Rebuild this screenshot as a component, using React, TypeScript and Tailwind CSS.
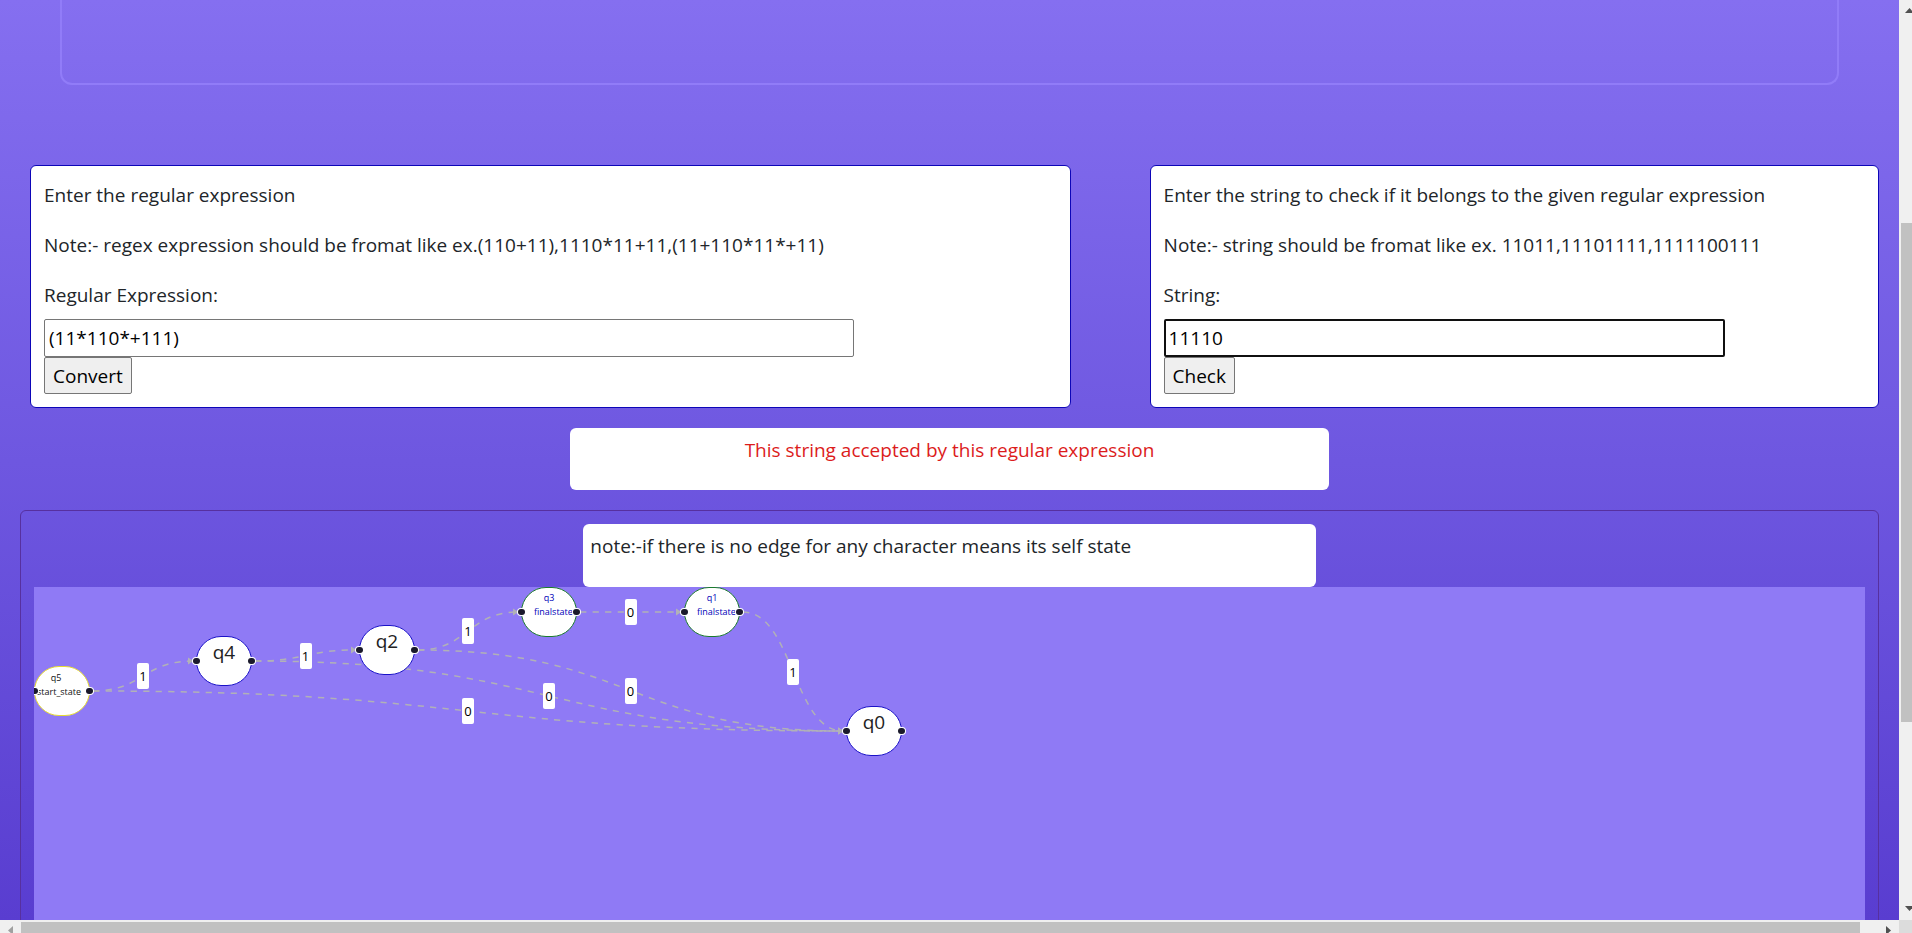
const NODES = [
  { id: "q5", x: 0, y: 79, kind: "start" },
  { id: "q4", x: 162, y: 49, kind: "plain" },
  { id: "q2", x: 325, y: 38, kind: "plain" },
  { id: "q3", x: 487, y: 0, kind: "final" },
  { id: "q1", x: 650, y: 0, kind: "final" },
  { id: "q0", x: 812, y: 119, kind: "plain" },
];

const EDGES = [
  { from: "q5", to: "q4", label: "1" },
  { from: "q5", to: "q0", label: "0" },
  { from: "q4", to: "q2", label: "1" },
  { from: "q4", to: "q0", label: "0" },
  { from: "q2", to: "q3", label: "1" },
  { from: "q2", to: "q0", label: "0" },
  { from: "q3", to: "q1", label: "0" },
  { from: "q1", to: "q0", label: "1" },
];

const NODE_W = 56;
const NODE_H = 50;

function ends(edge: { from: string; to: string }) {
  const a = NODES.find((n) => n.id === edge.from)!;
  const b = NODES.find((n) => n.id === edge.to)!;
  return {
    x1: a.x + NODE_W + 3,
    y1: a.y + NODE_H / 2,
    x2: b.x - 3,
    y2: b.y + NODE_H / 2,
  };
}

const NODE_STYLE: Record<string, string> = {
  start: "border-[#e6dc32] text-[#111] text-[9px] leading-[14px] pt-1",
  plain: "border-[#1a12c8] text-[#222] text-[19px] leading-[30px]",
  final: "border-[#1b7a2e] text-[#0000b8] text-[9px] leading-[14px] pt-[3px]",
};

function Graph() {
  return (
    <div className="relative h-[400px] overflow-hidden bg-[#8f7af5]">
      <svg className="absolute inset-0 size-full" fill="none" stroke="#b1b1b7" aria-hidden="true">
        <defs>
          <marker id="arrow" viewBox="0 0 6 8" refX="5" refY="4" markerWidth="6" markerHeight="8" markerUnits="userSpaceOnUse" orient="0">
            <path d="M0 0.5L5.5 4L0 7.5Z" fill="#b1b1b7" stroke="none" />
          </marker>
        </defs>
        {EDGES.map((e) => {
          const { x1, y1, x2, y2 } = ends(e);
          const m = (x1 + x2) / 2;
          return (
            <path
              key={e.from + e.to}
              d={`M${x1},${y1} C${m},${y1} ${m},${y2} ${x2},${y2}`}
              strokeDasharray="6.25"
              strokeWidth="1.5"
              markerEnd="url(#arrow)"
            />
          );
        })}
      </svg>
      {EDGES.map((e) => {
        const { x1, y1, x2, y2 } = ends(e);
        return (
          <span
            key={e.from + e.to}
            className="absolute flex h-[26px] w-3 -translate-x-1/2 -translate-y-1/2 items-center justify-center rounded-xs bg-white text-[13px] text-black"
            style={{ left: (x1 + x2) / 2, top: (y1 + y2) / 2 }}
          >
            {e.label}
          </span>
        );
      })}
      {NODES.map((n) => (
        <div
          key={n.id}
          className={`absolute h-[50px] w-14 rounded-full border bg-white text-center ${NODE_STYLE[n.kind]}`}
          style={{ left: n.x, top: n.y }}
        >
          {n.kind === "start" && (
            <>
              <div className="pr-3">{n.id}</div>
              <div className="pl-0.5 text-left">start_state</div>
            </>
          )}
          {n.kind === "plain" && n.id}
          {n.kind === "final" && (
            <>
              <div>{n.id}</div>
              <div className="pl-3 text-left">finalstate</div>
            </>
          )}
          <span className="absolute top-[21px] -left-1 h-1.5 w-[7px] rounded-full bg-[#1a192b] ring-1 ring-white" />
          <span className="absolute top-[21px] -right-1 h-1.5 w-[7px] rounded-full bg-[#1a192b] ring-1 ring-white" />
        </div>
      ))}
    </div>
  );
}

type FormProps = {
  id: string;
  title: string;
  note: string;
  label: string;
  value: string;
  action: string;
  className: string;
  inputClass: string;
};

function FormCard({ id, title, note, label, value, action, className, inputClass }: FormProps) {
  return (
    <form
      className={`rounded-md border border-[#0d06b8] bg-white px-[13px] pt-3.5 pb-[13px] ${className}`}
      onSubmit={(e) => e.preventDefault()}
    >
      <p className="mb-5">{title}</p>
      <p className="mb-5">{note}</p>
      <label htmlFor={id} className="mb-[9px] block">
        {label}
      </label>
      <input
        id={id}
        type="text"
        defaultValue={value}
        className={`block h-[38px] rounded-xs bg-white text-black outline-none ${inputClass}`}
      />
      <button type="submit" className="block h-[37px] rounded-xs border border-[#767676] bg-[#efefef] px-2 text-black">
        {action}
      </button>
    </form>
  );
}

function Bar({ vertical }: { vertical?: boolean }) {
  return vertical ? (
    <div className="flex w-[13px] shrink-0 flex-col overflow-hidden bg-[#f0f0f0] pl-0.5" aria-hidden="true">
      <svg className="h-[223px] w-4 shrink-0" viewBox="0 0 16 223">
        <path d="M4 13L8.500 8L13 13Z" fill="#505050" />
      </svg>
      <div className="h-[499px] shrink-0 bg-[#c1c1c1]" />
      <div className="grow" />
      <svg className="h-5 w-4 shrink-0" viewBox="0 0 16 20">
        <path d="M4 6L8.500 11L13 6Z" fill="#505050" />
      </svg>
    </div>
  ) : (
    <div className="flex h-[13px] shrink-0 overflow-hidden bg-[#f0f0f0] pt-0.5" aria-hidden="true">
      <svg className="h-4 w-[21px] shrink-0" viewBox="0 0 21 16">
        <path d="M13 4L8 8.500L13 13Z" fill="#a0a0a0" />
      </svg>
      <div className="grow bg-[#c1c1c1]" />
      <svg className="h-4 w-[39px] shrink-0" viewBox="0 0 39 16">
        <path d="M26 4L31 8.500L26 13Z" fill="#505050" />
      </svg>
      <div className="-mt-0.5 h-4 w-[13px] shrink-0 bg-[#dcdcdc]" />
    </div>
  );
}

export default function App() {
  return (
    <div className="flex h-screen flex-col overflow-hidden font-['Open_Sans',sans-serif] text-[19px] leading-[30px] text-[#212529]">
      <div className="flex min-h-0 grow">
        <main className="min-w-0 grow overflow-hidden bg-linear-to-b from-[#856ff0] to-[#593dd0]">
          <div className="mx-[60px] h-[85px] rounded-b-xl border-2 border-t-0 border-[#917cf8]" />
          <div className="mt-20 mr-5 ml-[30px] flex justify-between">
            <FormCard
              id="regex"
              title="Enter the regular expression"
              note="Note:- regex expression should be fromat like ex.(110+11),1110*11+11,(11+110*11*+11)"
              label="Regular Expression:"
              value="(11*110*+111)"
              action="Convert"
              className="w-[56.3%]"
              inputClass="w-4/5 border border-[#767676] px-1"
            />
            <FormCard
              id="string"
              title="Enter the string to check if it belongs to the given regular expression"
              note="Note:- string should be fromat like ex. 11011,11101111,1111100111"
              label="String:"
              value="11110"
              action="Check"
              className="w-[39.45%]"
              inputClass="w-4/5 border-2 border-[#101010] px-[3px]"
            />
          </div>
          <p className="mx-auto mt-5 h-[62px] w-2/5 rounded-md bg-white pt-[7px] text-center text-[#dc1c1c]">
            This string accepted by this regular expression
          </p>
          <section className="mx-5 mt-5 rounded-md border border-[#57309f] px-[13px] pt-[13px]">
            <p className="mx-auto h-[63px] w-2/5 rounded-md bg-white px-[7px] pt-[7px]">
              note:-if there is no edge for any character means its self state
            </p>
            <Graph />
          </section>
        </main>
        <Bar vertical />
      </div>
      <Bar />
    </div>
  );
}
